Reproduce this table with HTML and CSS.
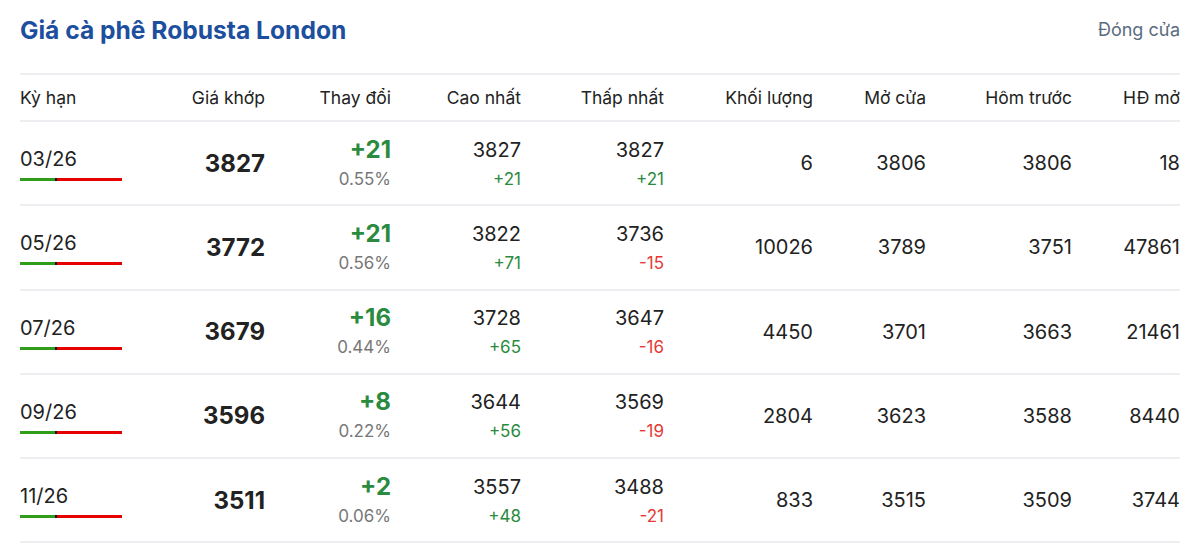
FILE: index.html
```html
<!DOCTYPE html>
<html lang="vi">
<head>
<meta charset="utf-8">
<link rel="stylesheet" href="styles.css">
</head>
<body>
<div class="wrap">
  <div class="top">
    <h1 class="title">Giá cà phê Robusta London</h1>
    <span class="status">Đóng cửa</span>
  </div>
  <div class="table">
    <div class="row head">
      <div class="c c1">Kỳ hạn</div>
      <div class="c">Giá khớp</div>
      <div class="c">Thay đổi</div>
      <div class="c">Cao nhất</div>
      <div class="c">Thấp nhất</div>
      <div class="c">Khối lượng</div>
      <div class="c">Mở cửa</div>
      <div class="c">Hôm trước</div>
      <div class="c">HĐ mở</div>
    </div>

    <div class="row">
      <div class="c c1"><div class="term">03/26</div><div class="bar" style="--p:34%"></div></div>
      <div class="c price">3827</div>
      <div class="c"><div class="chg up">+21</div><div class="pct">0.55%</div></div>
      <div class="c"><div class="val">3827</div><div class="sub up">+21</div></div>
      <div class="c"><div class="val">3827</div><div class="sub up">+21</div></div>
      <div class="c">6</div>
      <div class="c">3806</div>
      <div class="c">3806</div>
      <div class="c">18</div>
    </div>

    <div class="row">
      <div class="c c1"><div class="term">05/26</div><div class="bar" style="--p:34%"></div></div>
      <div class="c price">3772</div>
      <div class="c"><div class="chg up">+21</div><div class="pct">0.56%</div></div>
      <div class="c"><div class="val">3822</div><div class="sub up">+71</div></div>
      <div class="c"><div class="val">3736</div><div class="sub down">-15</div></div>
      <div class="c">10026</div>
      <div class="c">3789</div>
      <div class="c">3751</div>
      <div class="c">47861</div>
    </div>

    <div class="row">
      <div class="c c1"><div class="term">07/26</div><div class="bar" style="--p:34%"></div></div>
      <div class="c price">3679</div>
      <div class="c"><div class="chg up">+16</div><div class="pct">0.44%</div></div>
      <div class="c"><div class="val">3728</div><div class="sub up">+65</div></div>
      <div class="c"><div class="val">3647</div><div class="sub down">-16</div></div>
      <div class="c">4450</div>
      <div class="c">3701</div>
      <div class="c">3663</div>
      <div class="c">21461</div>
    </div>

    <div class="row">
      <div class="c c1"><div class="term">09/26</div><div class="bar" style="--p:34%"></div></div>
      <div class="c price">3596</div>
      <div class="c"><div class="chg up">+8</div><div class="pct">0.22%</div></div>
      <div class="c"><div class="val">3644</div><div class="sub up">+56</div></div>
      <div class="c"><div class="val">3569</div><div class="sub down">-19</div></div>
      <div class="c">2804</div>
      <div class="c">3623</div>
      <div class="c">3588</div>
      <div class="c">8440</div>
    </div>

    <div class="row">
      <div class="c c1"><div class="term">11/26</div><div class="bar" style="--p:34%"></div></div>
      <div class="c price">3511</div>
      <div class="c"><div class="chg up">+2</div><div class="pct">0.06%</div></div>
      <div class="c"><div class="val">3557</div><div class="sub up">+48</div></div>
      <div class="c"><div class="val">3488</div><div class="sub down">-21</div></div>
      <div class="c">833</div>
      <div class="c">3515</div>
      <div class="c">3509</div>
      <div class="c">3744</div>
    </div>
  </div>
</div>
</body>
</html>
```
FILE: styles.css
```css
* { box-sizing: border-box; }
html, body { margin: 0; padding: 0; background: #fff; }
body {
  font-family: Inter, "Noto Sans", "Liberation Sans", sans-serif;
  color: #222;
}
.wrap { padding: 0 20px; }
.top {
  height: 73px;
  display: flex;
  justify-content: space-between;
  align-items: flex-start;
  padding-top: 14px;
}
.title {
  margin: 0;
  font-size: 24.6px;
  font-weight: 700;
  color: #1d4f9e;
  line-height: 32px;
}
.status {
  font-size: 18px;
  color: #5b6b80;
  line-height: 32px;
}
.table { border-top: 2px solid #eceef1; }
.row {
  display: grid;
  grid-template-columns: 125px 120px 126px 130px 143px 149px 113px 146px 108px;
  height: 84.25px;
  border-bottom: 2px solid #eceef1;
  align-items: center;
  font-size: 20px;
}
.row.head { height: 47px; font-size: 17.5px; }
.c { text-align: right; }
.c1 { text-align: left; }
.term { font-size: 20px; line-height: 24px; margin-top: 2px; }
.bar {
  width: 102px;
  height: 3px;
  margin-top: 7px;
  background: linear-gradient(to right, #2e9e18 0, #2e9e18 var(--p), #111 var(--p), #111 calc(var(--p) + 2px), #e60000 calc(var(--p) + 2px), #e60000 100%);
}
.price { font-size: 24px; font-weight: 700; }
.chg { font-size: 24px; font-weight: 700; line-height: 30px; margin-top: 1px; }
.pct { font-size: 17px; color: #777; line-height: 28px; }
.val { font-size: 20px; line-height: 30px; margin-top: 1px; }
.sub { font-size: 17px; line-height: 28px; }
.up { color: #2a8a3e; }
.down { color: #e53935; }
```
